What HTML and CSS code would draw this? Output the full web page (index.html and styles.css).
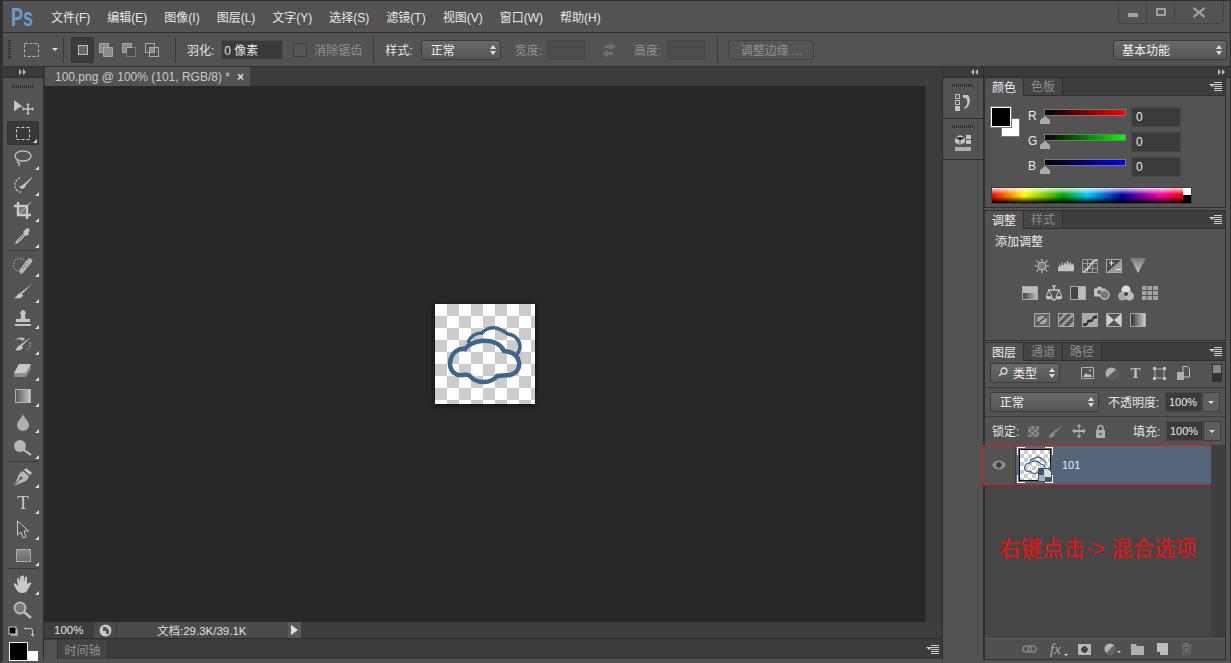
FILE: index.html
```html
<!DOCTYPE html>
<html lang="zh-CN">
<head>
  <meta charset="UTF-8" />
  <title>Photoshop - 100.png</title>
  <link rel="stylesheet" href="styles.css">
</head>
<body>

<div class="window">

  <!-- menu -->
  <header class="menubar">
    <span class="logo"><span>Ps</span></span>
    <nav class="menu">
      <span>文件(F)</span><span>编辑(E)</span><span>图像(I)</span><span>图层(L)</span><span>文字(Y)</span><span>选择(S)</span><span>滤镜(T)</span><span>视图(V)</span><span>窗口(W)</span><span>帮助(H)</span>
    </nav>
    <div class="winbtns">
      <span class="winbtn"><i class="w-min"></i></span>
      <span class="winbtn"><i class="w-max"></i></span>
      <span class="winbtn wide">
        <svg width="12" height="11" viewBox="0 0 12 11"><path d="M1 0l5 4 5-4 1 2-4 3.500 4 3.500-1 2-5-4-5 4-1-2 4-3.500-4-3.500z" fill="#a0a0a0"/></svg>
      </span>
    </div>
  </header>

  <!-- options -->
  <div class="optbar">
    <span class="grip-v"></span>
    <svg class="o-marq" width="18" height="16" viewBox="0 0 18 16"><rect x="1.500" y="1.500" width="14" height="13" fill="none" stroke="#bbb" stroke-dasharray="3 2"/></svg>
    <span class="caret o-caret"></span>
    <span class="vsep s1"></span>
    <div class="modes">
      <span class="mode active"><svg width="12" height="12" viewBox="0 0 12 12"><rect x="1.500" y="1.500" width="9" height="9" fill="#666" stroke="#c0c0c0"/></svg></span>
      <span class="mode"><svg width="16" height="16" viewBox="0 0 16 16"><rect x="1.500" y="1.500" width="9" height="9" fill="#8a8a8a" stroke="#a8a8a8"/><rect x="5.500" y="5.500" width="9" height="9" fill="#8a8a8a" stroke="#a8a8a8"/></svg></span>
      <span class="mode"><svg width="16" height="16" viewBox="0 0 16 16"><rect x="5.500" y="5.500" width="9" height="9" fill="#4c4c4c" stroke="#7a7a7a"/><path d="M1.500 1.500h9v4h-5v5h-4z" fill="#8a8a8a" stroke="#a8a8a8"/></svg></span>
      <span class="mode"><svg width="16" height="16" viewBox="0 0 16 16"><rect x="1.500" y="1.500" width="9" height="9" fill="none" stroke="#a8a8a8"/><rect x="5.500" y="5.500" width="9" height="9" fill="none" stroke="#a8a8a8"/><rect x="6" y="6" width="4" height="4" fill="#8a8a8a"/></svg></span>
    </div>
    <span class="vsep s2"></span>
    <span class="olabel feather">羽化:</span>
    <span class="ofield feather-in">0 像素</span>
    <span class="check"></span>
    <span class="olabel dim anti">消除锯齿</span>
    <span class="vsep s3"></span>
    <span class="olabel style-l">样式:</span>
    <span class="select style-s">正常<b class="updown"></b></span>
    <span class="olabel dim w-l">宽度:</span>
    <span class="ofield off w-in"></span>
    <svg class="swap" width="16" height="14" viewBox="0 0 16 14"><path d="M9 0l6 3.500-6 3.500V5H4V2h5zM7 7v2h5v3H7v2L1 10.500z" fill="#6f6f6f"/></svg>
    <span class="olabel dim h-l">高度:</span>
    <span class="ofield off h-in"></span>
    <span class="vsep s4"></span>
    <span class="refine">调整边缘 ...</span>
    <span class="select workspace">基本功能<b class="updown"></b></span>
  </div>

  <div class="main">

    <!-- tools -->
    <aside class="tools">
      <div class="strip"><svg class="arrows" width="8" height="6" viewBox="0 0 8 6"><path d="M0 0l3 3-3 3zM4 0l3 3-3 3z" fill="#c0c0c0"/></svg></div>
      <div class="grip"></div>

      <div class="tool"><svg width="24" height="18" viewBox="0 0 24 18"><path d="M3 2l9 7-4 .5-5 4z" fill="#c4c4c4"/><path d="M17 7v8M13 11h8" stroke="#c4c4c4" stroke-width="1.500"/><path d="M17 5l2 2h-4zM17 17l2-2h-4zM11 11l2-2v4zM23 11l-2-2v4z" fill="#c4c4c4"/></svg></div>
      <div class="tool more active"><svg width="16" height="15" viewBox="0 0 16 15"><rect x="1.500" y="1.500" width="13" height="12" fill="none" stroke="#d0d0d0" stroke-dasharray="3 2"/></svg></div>
      <div class="tool more"><svg width="20" height="18" viewBox="0 0 20 18"><ellipse cx="10" cy="6" rx="8" ry="5" fill="none" stroke="#bdbdbd" stroke-width="1.500"/><path d="M5 10c-2 2 0 3 1 3s1 2-1 3" fill="none" stroke="#bdbdbd" stroke-width="1.300"/></svg></div>
      <div class="tool more"><svg width="20" height="18" viewBox="0 0 20 18"><path d="M7 2a6 7 0 1 0 2 14" fill="none" stroke="#bbb" stroke-dasharray="2 1.500" stroke-width="1.500"/><path d="M19 1L11 8l-5 3c3 3 6 2 7-2l6-7z" fill="#c4c4c4"/></svg></div>
      <div class="tool more"><svg width="20" height="20" viewBox="0 0 20 20"><path d="M5 1v13h13M1 5h13v13" fill="none" stroke="#c8c8c8" stroke-width="2.500"/><path d="M6 6h7v7H6z" fill="#777"/><path d="M5 14L18 1" stroke="#c8c8c8"/></svg></div>
      <div class="tool more"><svg width="18" height="20" viewBox="0 0 18 20"><path d="M12 2c2-2 5 1 3 3l-1 1 1 1-2 2-1-1-7 7-3 2-1-1 2-3 7-7-1-1 2-2z" fill="#c4c4c4"/><path d="M4 14l6-6" stroke="#666"/></svg></div>
      <div class="hsep"></div>
      <div class="tool more"><svg width="20" height="18" viewBox="0 0 20 18"><circle cx="7" cy="8" r="6.500" fill="none" stroke="#bbb" stroke-dasharray="1.500 1.500"/><path d="M7 12L15 2c2-2 5 1 4 3L10 16c-2 2-5-1-3-4z" fill="#b5b5b5"/><path d="M11 8l3 3M13 6l2 2M9 10l2 2" stroke="#777"/></svg></div>
      <div class="tool more"><svg width="20" height="18" viewBox="0 0 20 18"><path d="M19 1L9 11l-2-1z" fill="#c4c4c4"/><path d="M7 10l3 2c0 3-5 4-9 3 3-1 3-4 6-5z" fill="#c4c4c4"/></svg></div>
      <div class="tool more"><svg width="18" height="18" viewBox="0 0 18 18"><path d="M9 1a3 3 0 0 1 2 5c0 2 0 3 1 4h4v3H2v-3h4c1-1 1-2 1-4a3 3 0 0 1 2-5z" fill="#c4c4c4"/><rect x="1" y="15" width="16" height="2" fill="#c4c4c4"/></svg></div>
      <div class="tool more"><svg width="20" height="18" viewBox="0 0 20 18"><path d="M2 5c3-3 6-3 8-2L8 1l4 3-4 3 1-2C7 4 5 4 2 5z" fill="#bbb"/><path d="M18 2L9 11l-2-1zM7 10l3 2c0 3-5 4-8 3 2-1 2-4 5-5z" fill="#c4c4c4"/><path d="M17 7a5 6 0 0 1-4 8" fill="none" stroke="#bbb" stroke-dasharray="2 1"/></svg></div>
      <div class="tool more"><svg width="20" height="16" viewBox="0 0 20 16"><path d="M6 2h12l-5 9H1z" fill="#c9c9c9"/><path d="M1 11h12v4H1zM13 11l5-9v4l-5 9z" fill="#8e8e8e"/></svg></div>
      <div class="tool more"><span class="grad-ico"></span></div>
      <div class="tool more"><svg width="14" height="18" viewBox="0 0 14 18"><path d="M7 1c1 4 6 7 6 11a6 6 0 0 1-12 0C1 8 6 5 7 1z" fill="#b0b0b0"/></svg></div>
      <div class="tool more"><svg width="20" height="18" viewBox="0 0 20 18"><circle cx="7" cy="7" r="6" fill="#b5b5b5"/><path d="M11 11l7 5" stroke="#c8c8c8" stroke-width="2"/></svg></div>
      <div class="hsep"></div>
      <div class="tool more"><svg width="20" height="20" viewBox="0 0 20 20"><path d="M13 1l6 5-2 2-6-5z" fill="#c8c8c8"/><path d="M10 4l6 5c-1 4-4 6-8 7l-7 3 3-7c1-4 3-7 6-8z" fill="#b5b5b5"/><path d="M2 18l5-6" stroke="#555"/><circle cx="8" cy="11" r="1.500" fill="#555"/></svg></div>
      <div class="tool more"><span class="tool-t">T</span></div>
      <div class="tool more"><svg width="14" height="19" viewBox="0 0 14 19"><path d="M1.500 1l11 10H8l2 6-3 1-2-6-3.500 3z" fill="#4e4e4e" stroke="#c8c8c8"/></svg></div>
      <div class="tool more"><span class="rect-ico"></span></div>
      <div class="hsep"></div>
      <div class="tool more"><svg width="20" height="19" viewBox="0 0 20 19"><path d="M5 11L4 4a1 1 0 0 1 2 0l1 3V2a1 1 0 0 1 2 0v5V1.500a1 1 0 0 1 2 0V7l1-4.500a1 1 0 0 1 2 0V9l2-1c2-1 3 0 2 1l-3 5c-1 3-3 4-6 4-3 0-5-2-6-4L1 10c-1-2 1-2 2-1z" fill="#c8c8c8"/></svg></div>
      <div class="tool"><svg width="20" height="18" viewBox="0 0 20 18"><circle cx="7" cy="7" r="5.500" fill="#777" stroke="#b8b8b8" stroke-width="2"/><path d="M11 11l7 6" stroke="#c0c0c0" stroke-width="2.500"/></svg></div>

      <div class="swaprow">
        <svg width="11" height="11" viewBox="0 0 11 11"><rect x="3" y="3" width="7" height="7" fill="#9a9a9a"/><rect x="1" y="1" width="7" height="7" fill="#000" stroke="#ccc"/></svg>
        <svg width="11" height="12" viewBox="0 0 11 12"><path d="M2 1v3l-2-1.500zM2 2h4c2 0 3 1 3 3v3h1.500L8.500 11 7 8h1V5c0-1.500-1-2-2-2H2z" fill="#c4c4c4"/></svg>
      </div>
      <div class="swatches">
        <span class="sw-bg"></span>
        <span class="sw-fg"></span>
      </div>
    </aside>

    <!-- document -->
    <section class="doc">
      <div class="tabrow">
        <div class="doctab"><span>100.png @ 100% (101, RGB/8) *</span><i>×</i></div>
      </div>
      <div class="canvasrow">
        <div class="canvas">
          <div class="picture">
            <svg width="100" height="100" viewBox="0 0 100 100">
              <path d="M33 39C35 32 41 29 47 29C50 25 56 23 61 24C66 25 70 28 73 30C80 31 85 36 85 43C85 46 84 48 82 50" fill="none" stroke="#3f658c" stroke-width="3.500"/>
              <path d="M30 45C24 44 16 48 15 59C15 68 21 72 28 71C31 71 32 70 35 72C41 80 56 80 62 72C66 71 70 72 75 71C82 69 85 64 84 58C83 52 78 48 69 47C65 39 56 36 46 37C38 38 33 41 30 45Z" fill="none" stroke="#3f658c" stroke-width="4.500"/>
            </svg>
          </div>
        </div>
        <div class="vscroll"></div>
      </div>
      <div class="statusbar">
        <span class="zoomval">100%</span>
        <span class="st-icon"><svg width="13" height="13" viewBox="0 0 13 13"><circle cx="6.500" cy="6.500" r="6" fill="#c9c9c9"/><path d="M4 3h3l3 3v4H7V7H4z" fill="#555"/></svg></span>
        <span class="st-doc">文档:29.3K/39.1K</span>
        <span class="st-next"></span>
        <span class="st-rest"></span>
      </div>
      <div class="timeline">
        <span class="tl-knob"></span>
        <span class="tl-tab">时间轴</span>
        <span class="menu-ico tl-menu"></span>
      </div>
    </section>

    <!-- collapsed dock -->
    <aside class="dock">
      <div class="strip end"><svg class="arrows" width="8" height="6" viewBox="0 0 8 6"><path d="M3 0L0 3l3 3zM7 0L4 3l3 3z" fill="#c0c0c0"/></svg></div>
      <div class="dockitem">
        <div class="grip"></div>
        <svg width="18" height="18" viewBox="0 0 18 18"><path d="M1.500 1.500h4v4h-4zM1.500 7.500h4v4h-4z" fill="none" stroke="#c4c4c4"/><path d="M1 13h5v5H1z" fill="#c4c4c4"/><path d="M9 2h5c3 4 3 10-3 14l-1-1c4-3 4-7 2-10H9z" fill="#c4c4c4"/></svg>
      </div>
      <div class="dockitem">
        <div class="grip"></div>
        <svg width="18" height="18" viewBox="0 0 18 18"><path d="M6 1l5 2.500v5L6 11 1 8.500v-5z" fill="#c4c4c4"/><path d="M1 3.500L6 6l5-2.500M6 6v5" stroke="#555"/><path d="M12 1h5v4h-5zM12 6h5v4h-5z" fill="#c4c4c4"/><path d="M1 13h16v4H1z" fill="#b0b0b0"/></svg>
      </div>
    </aside>

    <!-- panels -->
    <aside class="panels">
      <div class="strip end"><svg class="arrows" width="8" height="6" viewBox="0 0 8 6"><path d="M0 0l3 3-3 3zM4 0l3 3-3 3z" fill="#c0c0c0"/></svg></div>

      <section class="panel color">
        <div class="tabs">
          <span class="tab on">颜色</span><span class="tab">色板</span>
          <span class="menu-ico"></span>
        </div>
        <div class="color-body">
          <div class="cswatch"><span class="c-bg"></span><span class="c-fg"></span></div>
          <div class="sliders">
            <div class="srow"><label>R</label><div class="sbar"><span class="ramp r"></span><i class="thumb"></i></div><span class="val">0</span></div>
            <div class="srow"><label>G</label><div class="sbar"><span class="ramp g"></span><i class="thumb"></i></div><span class="val">0</span></div>
            <div class="srow"><label>B</label><div class="sbar"><span class="ramp b"></span><i class="thumb"></i></div><span class="val">0</span></div>
          </div>
        </div>
        <div class="spectrum"><span class="hues"></span><span class="ends"></span></div>
      </section>

      <section class="panel adjust">
        <div class="tabs">
          <span class="tab on">调整</span><span class="tab">样式</span>
          <span class="menu-ico"></span>
        </div>
        <p class="adj-title">添加调整</p>
        <div class="adj-grid">
          <div class="adj-row">
            <svg width="18" height="18" viewBox="0 0 18 18"><circle cx="9" cy="9" r="4.500" fill="#777" stroke="#ccc"/><path d="M9 1v3M9 14v3M1 9h3M14 9h3M3 3l2 2M13 13l2 2M3 15l2-2M13 5l2-2" stroke="#ccc" stroke-width="1.300"/></svg>
            <svg width="18" height="14" viewBox="0 0 18 14"><path d="M0 13V7l1 2 1-5 1 4 2-6 1 5 2-5 1 4 2-6 1 6 2-4 1 4 2-2 1 3v6z" fill="#c4c4c4"/></svg>
            <svg width="16" height="14" viewBox="0 0 16 14"><path d="M.5.500h15v13H.5zM5.500 0v14M10.500 0v14M0 4.500h16M0 9.500h16" fill="none" stroke="#9a9a9a"/><path d="M1 13c6-1 7-11 14-12" fill="none" stroke="#ddd" stroke-width="1.500"/></svg>
            <span class="adj-exp"><svg width="16" height="14" viewBox="0 0 16 14"><path d="M0 14L16 0v14z" fill="#9a9a9a"/><path d="M0 14L16 0H0z" fill="#4b4b4b"/><path d="M3 4h5M5.500 1.500v5M10 10.500h5" stroke="#e8e8e8"/></svg></span>
            <svg width="16" height="15" viewBox="0 0 16 15"><defs><linearGradient id="vib" x1="0" y1="0" x2="0" y2="1"><stop offset="0" stop-color="#777"/><stop offset="1" stop-color="#c8c8c8"/></linearGradient></defs><path d="M0 0h16L8 15z" fill="url(#vib)"/></svg>
          </div>
          <div class="adj-row">
            <span class="ai ai-hue"></span>
            <svg width="16" height="16" viewBox="0 0 16 16"><path d="M8 1v3M2 5h12" stroke="#c8c8c8" stroke-width="1.500"/><path d="M6 0h4l-2 3zM3 5L0 12h6zM13 5l-3 7h6zM0 12a3 2 0 0 0 6 0zM10 12a3 2 0 0 0 6 0zM6 14h4v1H6z" fill="none" stroke="#c8c8c8"/><path d="M0 12h6l-1 2H1zM10 12h6l-1 2h-4z" fill="#c8c8c8"/></svg>
            <span class="ai ai-bw"></span>
            <svg width="18" height="16" viewBox="0 0 18 16"><path d="M0 3h3l1-2h4l1 2h4v9H0z" fill="#c4c4c4"/><circle cx="12" cy="10" r="5" fill="#777" stroke="#bbb" stroke-width="1.500"/><circle cx="6" cy="7" r="2.500" fill="#666"/></svg>
            <svg width="16" height="16" viewBox="0 0 16 16"><circle cx="8" cy="5" r="4.500" fill="#ddd"/><circle cx="4.500" cy="11" r="4.500" fill="#aaa"/><circle cx="11.500" cy="11" r="4.500" fill="#bbb"/><circle cx="8" cy="9" r="2" fill="#444"/></svg>
            <svg width="16" height="14" viewBox="0 0 16 14"><path d="M0 0h16v14H0z" fill="#a4a4a4"/><path d="M5 0v14M10.500 0v14M0 4.500h16M0 9.500h16" stroke="#555"/></svg>
          </div>
          <div class="adj-row">
            <span class="ai ai-inv"><svg width="12" height="10" viewBox="0 0 12 10"><ellipse cx="6" cy="5" rx="5" ry="4" fill="#aaa"/><path d="M1 9L11 1" stroke="#444" stroke-width="1.500"/></svg></span>
            <span class="ai ai-post"></span>
            <span class="ai ai-thr"><svg width="16" height="14" viewBox="0 0 16 14"><path d="M0 11l4-1 1-3 5-1 1-3 5-2v4l-4 1-1 3-5 1-1 3-5 2z" fill="#333"/></svg></span>
            <span class="ai ai-map"><svg width="16" height="14" viewBox="0 0 16 14"><path d="M0 0l8 7-8 7zM16 0L8 7l8 7z" fill="#d0d0d0"/></svg></span>
            <span class="ai ai-grad"></span>
          </div>
        </div>
      </section>

      <section class="panel layers">
        <div class="tabs">
          <span class="tab on">图层</span><span class="tab">通道</span><span class="tab">路径</span>
          <span class="menu-ico"></span>
        </div>
        <div class="l-row filter">
          <span class="select kind">
            <svg width="10" height="10" viewBox="0 0 10 10"><circle cx="6" cy="4" r="3" fill="none" stroke="#ddd" stroke-width="1.300"/><path d="M4 6L1 9" stroke="#ddd" stroke-width="1.500"/></svg>
            类型<b class="updown"></b>
          </span>
          <div class="f-icons">
            <svg width="13" height="12" viewBox="0 0 13 12"><path d="M.5.500h12v11H.5z" fill="none" stroke="#b0b0b0"/><path d="M2 10l3-4 2 2 2-1 2 3z" fill="#c4c4c4"/><circle cx="9" cy="3.500" r="1" fill="#c4c4c4"/></svg>
            <svg width="13" height="13" viewBox="0 0 13 13"><circle cx="6.500" cy="6.500" r="6" fill="#b0b0b0"/><path d="M11 2.500L2 10.500a6 6 0 0 0 9-8z" fill="#5a5a5a"/></svg>
            <span class="f-t">T</span>
            <svg width="13" height="13" viewBox="0 0 13 13"><path d="M2 2h9v9H2z" fill="none" stroke="#b0b0b0"/><path d="M0 0h3v3H0zM10 0h3v3h-3zM0 10h3v3H0zM10 10h3v3h-3z" fill="#c4c4c4"/></svg>
            <svg width="13" height="14" viewBox="0 0 13 14"><path d="M6 .5h4l2.500 2.500v8H6z" fill="none" stroke="#c4c4c4"/><path d="M0 6h7v8H0z" fill="#b0b0b0"/></svg>
          </div>
          <span class="f-toggle"></span>
        </div>
        <div class="l-row mode-row">
          <span class="select blend">正常<b class="updown"></b></span>
          <span class="l-label opac">不透明度:</span>
          <span class="combo"><span class="c-val">100%</span><span class="c-btn"><i class="caret"></i></span></span>
        </div>
        <div class="l-row lock-row">
          <span class="l-label">锁定:</span>
          <div class="locks">
            <span class="lk-check"></span>
            <svg width="15" height="13" viewBox="0 0 15 13"><path d="M15 0L7 8 5 7zM5 7l2 2c0 3-4 4-7 3 2-1 2-4 5-5z" fill="#8c8c8c"/></svg>
            <svg width="14" height="14" viewBox="0 0 14 14"><path d="M7 0l2.500 2.500h-2v3.500H11V4.500L14 7l-3 2.500V8H7.500v3.500h2L7 14l-2.500-2.500h2V8H3v1.500L0 7l3-2.500V6h3.500V2.500h-2z" fill="#b0b0b0"/></svg>
            <svg width="11" height="14" viewBox="0 0 11 14"><path d="M3 6V4a2.500 2.500 0 0 1 5 0v2" fill="none" stroke="#b0b0b0" stroke-width="1.500"/><path d="M1 6h9v8H1z" fill="#b0b0b0"/><circle cx="5.500" cy="10" r="1.200" fill="#555"/></svg>
          </div>
          <span class="l-label fill">填充:</span>
          <span class="combo"><span class="c-val">100%</span><span class="c-btn"><i class="caret"></i></span></span>
        </div>

        <div class="l-list">
          <div class="l-items">
            <div class="layer">
              <span class="eye"><svg width="14" height="10" viewBox="0 0 14 10"><path d="M0 5c3-6 11-6 14 0-3 6-11 6-14 0z" fill="#8c8c8c"/><circle cx="7" cy="5" r="2.700" fill="#3d3d3d"/></svg></span>
              <span class="thumb-box">
                <span class="thumb-img">
                  <svg width="30" height="30" viewBox="0 0 100 100"><path d="M33 39C35 32 41 29 47 29C50 25 56 23 61 24C66 25 70 28 73 30C80 31 85 36 85 43" fill="none" stroke="#3f658c" stroke-width="4"/><path d="M30 45C24 44 16 48 15 59C15 68 21 72 28 71C31 71 32 70 35 72C41 80 56 80 62 72C66 71 70 72 75 71C82 69 85 64 84 58C83 52 78 48 69 47C65 39 56 36 46 37C38 38 33 41 30 45Z" fill="none" stroke="#3f658c" stroke-width="4"/></svg>
                </span>
                <span class="smart"><svg width="12" height="12" viewBox="0 0 12 12"><path d="M5 0h4l3 3v5H5z" fill="#dcdcdc"/><path d="M0 6h6v6H0z" fill="#a8b2bf"/></svg></span>
              </span>
              <span class="l-name">101</span>
            </div>
            <p class="note">右键点击-&gt; 混合选项</p>
          </div>
          <div class="l-scroll"></div>
        </div>

        <div class="l-foot">
          <svg width="15" height="8" viewBox="0 0 15 8"><rect x="1" y="1" width="8" height="6" rx="3" fill="none" stroke="#858585" stroke-width="1.500"/><rect x="6" y="1" width="8" height="6" rx="3" fill="none" stroke="#858585" stroke-width="1.500"/></svg>
          <span class="fx">fx<i class="mini"></i></span>
          <span class="f-mask"></span>
          <span class="f-adj"><svg width="12" height="12" viewBox="0 0 12 12"><circle cx="6" cy="6" r="5.500" fill="#b4b4b4"/><path d="M10 2L2 10a5.500 5.500 0 0 0 8-8z" fill="#666"/></svg><i class="mini"></i></span>
          <svg width="13" height="11" viewBox="0 0 13 11"><path d="M0 0h5l1 2h7v9H0z" fill="#b0b0b0"/></svg>
          <svg width="11" height="12" viewBox="0 0 11 12"><path d="M0 0h11v12H3V9H0z" fill="#bdbdbd"/><path d="M0 9h3v3z" fill="#444"/></svg>
          <svg width="11" height="12" viewBox="0 0 11 12"><path d="M0 2h11M4 1.500V.5h3v1M2 3.500h7V12H2zM4 5v5M5.500 5v5M7 5v5" fill="none" stroke="#777"/></svg>
        </div>
      </section>
    </aside>
  </div>
</div>

</body>
</html>
```

FILE: styles.css
```css
* {
  box-sizing: border-box;
}

html, body {
  margin: 0;
  height: 663px;
  overflow: hidden;
}

body {
  background-color: #2e2e2e;
  color: #e4e4e4;
  font-family: "Liberation Sans", "Noto Sans CJK SC", sans-serif;
  font-size: 12px;
}

.window {
  width: 1231px;
  height: 663px;
  display: flex;
  flex-direction: column;
  background-color: #535353;
  border-top: 1px solid #2f2f2f;
  border-bottom: 3px solid #535353;
  border-right: 1px solid #2f2f2f;
  border-left: 3px solid #2f2f2f;
}

/* menu */
.menubar {
  height: 31px;
  display: flex;
  align-items: center;
  padding-left: 8px;
  position: relative;
}

.logo {
  width: 40px;
  font-family: "Liberation Sans", sans-serif;
  font-weight: 700;
  font-size: 25px;
  line-height: 28px;
  color: #6b9ac9;
}

.logo span {
  display: inline-block;
  transform: scaleX(0.72);
  transform-origin: left center;
}

.menu {
  display: flex;
  gap: 17px;
  font-size: 12px;
  color: #e8e8e8;
}

.winbtns {
  position: absolute;
  top: 0;
  right: 6px;
  height: 23px;
  display: flex;
  border: 1px solid #444;
  border-top: none;
  border-radius: 0 0 4px 4px;
}

.winbtn {
  width: 28px;
  display: flex;
  align-items: center;
  justify-content: center;
  border-right: 1px solid #444;
}

.winbtn.wide {
  width: 48px;
  border-right: none;
}

.w-min {
  width: 10px;
  height: 4px;
  margin-top: 6px;
  background-color: #a0a0a0;
}

.w-max {
  width: 10px;
  height: 8px;
  border: 2px solid #a0a0a0;
}

/* options bar */
.optbar {
  height: 35px;
  display: flex;
  align-items: center;
  border-top: 1px solid #2f2f2f;
  border-bottom: 1px solid #2f2f2f;
}

.grip-v {
  width: 3px;
  height: 20px;
  margin-left: 5px;
  background: repeating-linear-gradient(#2c2c2c 0 1px, transparent 1px 2px);
}

.o-marq { margin-left: 12px; }

.caret {
  display: inline-block;
  width: 0;
  height: 0;
  border-left: 3px solid transparent;
  border-right: 3px solid transparent;
  border-top: 3px solid #ddd;
}
.o-caret { margin-left: 11px; }

.vsep {
  width: 1px;
  height: 26px;
  background-color: #3b3b3b;
}
.s1 { margin-left: 5px; }
.s2 { margin-left: 12px; }
.s3 { margin-left: 11px; }
.s4 { margin-left: 11px; }

.modes {
  display: flex;
  margin-left: 7px;
}

.mode {
  width: 23px;
  height: 26px;
  display: flex;
  align-items: center;
  justify-content: center;
}

.mode.active {
  background-color: #3c3c3c;
  border: 1px solid #333;
  border-radius: 2px;
}

.olabel {
  font-size: 12px;
  color: #e4e4e4;
  white-space: nowrap;
}
.olabel.dim { color: #909090; }
.feather { margin-left: 11px; }
.anti { margin-left: 7px; }
.style-l { margin-left: 11px; }
.w-l { margin-left: 14px; }
.h-l { margin-left: 17px; }

.ofield {
  height: 20px;
  display: flex;
  align-items: center;
  background-color: #3a3a3a;
  border: 1px solid #4a4a4a;
  padding-left: 2px;
}
.feather-in { width: 62px; margin-left: 7px; }
.ofield.off {
  width: 39px;
  background-color: #4c4c4c;
  border-color: #484848;
}
.w-in { margin-left: 5px; }
.h-in { margin-left: 6px; }
.swap { margin-left: 15px; }

.check {
  width: 14px;
  height: 14px;
  margin-left: 10px;
  background-color: #555;
  border: 1px solid #3f3f3f;
  border-radius: 2px;
}

.select {
  height: 20px;
  display: flex;
  align-items: center;
  position: relative;
  padding-left: 8px;
  background: linear-gradient(#686868, #565656);
  border: 1px solid #3a3a3a;
  border-radius: 3px;
  color: #f0f0f0;
}

.updown {
  position: absolute;
  right: 4px;
  top: 4px;
  width: 6px;
  height: 10px;
}

.updown::before,
.updown::after {
  content: "";
  display: block;
  width: 0;
  height: 0;
  border-left: 3px solid transparent;
  border-right: 3px solid transparent;
}

.updown::before { border-bottom: 4px solid #ddd; }
.updown::after { border-top: 4px solid #ddd; margin-top: 2px; }

.style-s { width: 80px; margin-left: 8px; padding-left: 9px; }

.refine {
  width: 86px;
  height: 20px;
  margin-left: 10px;
  display: flex;
  align-items: center;
  justify-content: center;
  color: #919191;
  background-color: #555;
  border: 1px solid #444;
  border-radius: 3px;
}

.workspace {
  width: 114px;
  margin-left: auto;
  margin-right: 3px;
}

/* main area */
.main {
  flex: 1;
  display: flex;
  min-height: 0;
}

.strip {
  height: 11px;
  flex: none;
  display: flex;
  align-items: center;
  justify-content: center;
  background-color: #3a3a3a;
  border-bottom: 1px solid #2d2d2d;
}

.strip.end {
  justify-content: flex-end;
  padding-right: 4px;
}

.grip {
  height: 16px;
  flex: none;
  margin: 0 auto;
  width: 22px;
  background: repeating-linear-gradient(90deg, #2c2c2c 0 1px, transparent 1px 2px) center / 22px 3px no-repeat;
}

/* tools */
.tools {
  width: 41px;
  display: flex;
  flex-direction: column;
  border-right: 1px solid #2d2d2d;
}

.tool {
  height: 26px;
  display: flex;
  align-items: center;
  justify-content: center;
  position: relative;
  flex: none;
}

.tool.more::after {
  content: "";
  position: absolute;
  right: 4px;
  bottom: 2px;
  border-left: 4px solid transparent;
  border-bottom: 4px solid #ddd;
}

.tool.active {
  background-color: #383838;
  border: 1px solid #333;
  border-radius: 2px;
  height: 24px;
  margin: 1px 4px;
}
.tool.active::after { right: 1px; bottom: 1px; }

.hsep {
  height: 3px;
  flex: none;
  margin: 0 5px;
  border-top: 1px solid #3a3a3a;
}

.grad-ico {
  width: 16px;
  height: 14px;
  background: linear-gradient(90deg, #5a5a5a, #c4c4c4);
  border: 1px solid #b0b0b0;
}

.rect-ico {
  width: 15px;
  height: 13px;
  background: linear-gradient(#888, #6c6c6c);
  border: 1px solid #aaa;
}

.tool-t {
  font-family: "Liberation Serif", serif;
  font-size: 19px;
  color: #c8c8c8;
}

.swaprow {
  height: 17px;
  flex: none;
  display: flex;
  align-items: center;
  justify-content: space-between;
  padding: 0 8px 0 5px;
}

.swatches {
  position: relative;
  flex: 1;
}

.sw-fg {
  position: absolute;
  left: 6px;
  top: 2px;
  width: 19px;
  height: 19px;
  background-color: #000;
  border: 1px solid #eee;
}

.sw-bg {
  position: absolute;
  left: 25px;
  top: 11px;
  width: 10px;
  height: 10px;
  background-color: #fff;
}

/* document */
.doc {
  width: 899px;
  display: flex;
  flex-direction: column;
  border-right: 1px solid #2d2d2d;
}

.tabrow {
  height: 19px;
  display: flex;
  padding-left: 1px;
  background-color: #3c3c3c;
}

.doctab {
  width: 205px;
  display: flex;
  align-items: center;
  justify-content: space-between;
  padding: 0 6px 0 10px;
  background-color: #535353;
  color: #c9c9c9;
  font-size: 12px;
}

.doctab i {
  font-style: normal;
  font-weight: 700;
  color: #ddd;
}

.canvasrow {
  height: 536px;
  display: flex;
}

.canvas {
  flex: 1;
  display: flex;
  align-items: center;
  justify-content: center;
  background-color: #282828;
}

.vscroll {
  width: 17px;
  background-color: #3c3c3c;
  border-left: 1px solid #343434;
}

.picture {
  width: 100px;
  height: 100px;
  background-color: #fff;
  background-image: conic-gradient(#ccc 25%, #fff 0 50%, #ccc 0 75%, #fff 0);
  background-size: 24px 24px;
  box-shadow: 0 1px 6px rgba(0, 0, 0, 0.7);
}

.statusbar {
  height: 17px;
  display: flex;
  align-items: center;
  background-color: #3e3e3e;
  border-bottom: 1px solid #2d2d2d;
  font-size: 11.500px;
}

.zoomval {
  width: 50px;
  padding-left: 10px;
  color: #e4e4e4;
}

.st-icon {
  width: 23px;
  height: 16px;
  display: flex;
  align-items: center;
  justify-content: center;
  background-color: #4b4b4b;
  border-right: 1px solid #3a3a3a;
}

.st-doc {
  width: 171px;
  height: 16px;
  display: flex;
  align-items: center;
  padding-left: 40px;
  background-color: #4b4b4b;
  color: #e0e0e0;
}

.st-next {
  width: 13px;
  height: 16px;
  background-color: #5a5a5a;
  position: relative;
}

.st-next::after {
  content: "";
  position: absolute;
  left: 3px;
  top: 3px;
  border-top: 5px solid transparent;
  border-bottom: 5px solid transparent;
  border-left: 7px solid #e0e0e0;
}

.st-rest {
  flex: 1;
  height: 16px;
}

.timeline {
  height: 20px;
  display: flex;
  align-items: center;
  background-color: #3c3c3c;
  position: relative;
}

.tl-knob {
  width: 14px;
  height: 19px;
  background-color: #535353;
  border-right: 1px solid #2d2d2d;
}

.tl-tab {
  width: 50px;
  height: 19px;
  display: flex;
  align-items: center;
  justify-content: center;
  color: #8f8f8f;
  background-color: #444;
  border-right: 1px solid #333;
}

.tl-menu { margin-left: auto; }

/* dock */
.dock {
  width: 41px;
  display: flex;
  flex-direction: column;
  border-right: 1px solid #2d2d2d;
}

.dockitem {
  height: 41px;
  display: flex;
  flex-direction: column;
  align-items: center;
  border-bottom: 1px solid #2d2d2d;
}

.dockitem .grip { height: 15px; }

.menu-ico {
  width: 13px;
  height: 9px;
  margin-left: auto;
  margin-right: 3px;
  background: repeating-linear-gradient(#ccc 0 1px, transparent 1px 2px) right / 8px 9px no-repeat;
  position: relative;
}

.menu-ico::before {
  content: "";
  position: absolute;
  left: 0;
  top: 2px;
  border-left: 3px solid transparent;
  border-right: 3px solid transparent;
  border-top: 3px solid #ccc;
}

/* panels */
.panels {
  flex: 1;
  display: flex;
  flex-direction: column;
  margin-right: 4px;
}

.panels .strip { margin-right: -4px; }

.panel {
  display: flex;
  flex-direction: column;
  border: 1px solid #2f2f2f;
  border-top: none;
}

.tabs {
  height: 18px;
  display: flex;
  align-items: stretch;
  background-color: #3e3e3e;
  border-bottom: 1px solid #2f2f2f;
  flex: none;
}

.tab {
  width: 39px;
  display: flex;
  align-items: center;
  justify-content: center;
  padding-bottom: 2px;
  color: #8c8c8c;
  background-color: #454545;
  border-right: 1px solid #2f2f2f;
}

.tab.on {
  color: #ededed;
  background-color: #535353;
  margin-bottom: -1px;
}

.tabs .menu-ico { align-self: center; }

/* color panel */
.color { height: 130px; flex: none; }

.color-body {
  display: flex;
  padding: 11px 0 0 6px;
}

.cswatch {
  width: 29px;
  height: 30px;
  position: relative;
}

.c-fg {
  position: absolute;
  left: 0;
  top: 0;
  width: 20px;
  height: 20px;
  background-color: #000;
  border: 1px solid #fff;
  outline: 1px solid #777;
}

.c-bg {
  position: absolute;
  right: 0;
  bottom: 0;
  width: 19px;
  height: 19px;
  background-color: #fff;
  border: 1px solid #777;
}

.sliders {
  margin-left: 8px;
  display: flex;
  flex-direction: column;
  gap: 5px;
}

.srow {
  height: 20px;
  display: flex;
}

.srow label {
  width: 16px;
  line-height: 18px;
  color: #ededed;
}

.sbar {
  width: 82px;
  position: relative;
}

.ramp {
  display: block;
  height: 7px;
  margin-top: 2px;
  border: 1px solid #777;
}
.ramp.r { background: linear-gradient(90deg, #000, #f00); }
.ramp.g { background: linear-gradient(90deg, #000, #0f0); }
.ramp.b { background: linear-gradient(90deg, #000, #00f); }

.thumb {
  position: absolute;
  left: -4px;
  top: 9px;
  width: 10px;
  height: 8px;
  background-color: #aaa;
  clip-path: polygon(50% 0, 100% 50%, 100% 100%, 0 100%, 0 50%);
}

.val {
  width: 50px;
  height: 20px;
  margin-left: 5px;
  display: flex;
  align-items: center;
  padding-left: 4px;
  background-color: #3b3b3b;
  border: 1px solid #474747;
  color: #ededed;
}

.spectrum {
  width: 201px;
  height: 17px;
  margin: 10px 0 0 6px;
  display: flex;
  border: 1px solid #3f3f3f;
}

.hues {
  flex: 1;
  background:
    linear-gradient(rgba(255, 255, 255, 0.85), transparent 42%, transparent 55%, #000),
    linear-gradient(90deg, #f00, #ff0 17%, #0a0 37%, #0cf 50%, #00a 68%, #f0a 88%, #f00);
}

.ends {
  width: 8px;
  background: linear-gradient(#fff 50%, #000 50%);
}

/* adjustments */
.adjust {
  height: 131px;
  flex: none;
  margin-top: 2px;
  border-top: 1px solid #2f2f2f;
}

.adj-title {
  margin: 4px 0 0 10px;
  font-size: 12px;
  line-height: 18px;
  color: #ededed;
}

.adj-grid {
  width: 200px;
  margin: 6px 0 0 5px;
  display: flex;
  flex-direction: column;
  gap: 10px;
}

.adj-row {
  height: 17px;
  display: flex;
  align-items: center;
  justify-content: center;
  gap: 8px;
}

.adj-row > * {
  width: 16px;
  flex: none;
}

.adj-exp, .ai {
  display: flex;
  height: 14px;
}

.adj-exp { outline: 1px solid #aaa; outline-offset: -1px; }

.ai { border: 1px solid #aaa; align-items: center; justify-content: center; overflow: hidden; }
.ai-hue { background: linear-gradient(#bbb 50%, transparent 50%), linear-gradient(90deg, #444, #bbb); }
.ai-bw { background: linear-gradient(90deg, #444 50%, #bbb 50%); }
.ai-inv { background-color: #666; }
.ai-post { background: repeating-linear-gradient(135deg, #555 0 3px, #999 3px 6px); }
.ai-thr { background-color: #aaa; }
.ai-map { background-color: #555; }
.ai-grad { background: linear-gradient(90deg, #333, #ccc); }

/* layers */
.layers {
  flex: 1;
  margin-top: 1px;
  border-top: 1px solid #2f2f2f;
  min-height: 0;
}

.l-row {
  display: flex;
  align-items: center;
  padding-left: 5px;
  border-bottom: 1px solid #3c3c3c;
  flex: none;
}

.l-row .select,
.l-label {
  padding-bottom: 2px;
}

.filter { height: 27px; padding-bottom: 2px; }
.mode-row { height: 29px; }
.lock-row { height: 29px; padding-left: 7px; }

.kind {
  width: 70px;
  gap: 5px;
  padding-left: 7px;
}

.f-icons {
  display: flex;
  align-items: center;
  margin-left: 21px;
  gap: 11px;
}

.f-icons > * {
  width: 13px;
  flex: none;
}

.f-t {
  font-family: "Liberation Serif", serif;
  font-size: 15px;
  font-weight: 700;
  line-height: 14px;
  color: #c0c0c0;
  text-align: center;
}

.f-toggle {
  width: 10px;
  height: 18px;
  margin-left: 22px;
  background: linear-gradient(#888 50%, #333 50%);
  border: 1px solid #333;
}

.blend { width: 109px; padding-left: 9px; }

.l-label {
  color: #e4e4e4;
  white-space: nowrap;
}

.opac { margin-left: 9px; width: 57px; }
.fill { margin-left: auto; width: 33px; }

.combo {
  display: flex;
  width: 55px;
  height: 20px;
  margin-right: 4px;
}

.c-val {
  width: 37px;
  display: flex;
  align-items: center;
  padding-left: 3px;
  background-color: #3a3a3a;
  border: 1px solid #474747;
  font-size: 11px;
  color: #ededed;
}

.c-btn {
  flex: 1;
  display: flex;
  align-items: center;
  justify-content: center;
  background-color: #5e5e5e;
  border: 1px solid #3f3f3f;
}

.locks {
  display: flex;
  align-items: center;
  margin-left: 9px;
  gap: 9px;
}

.locks > * { flex: none; }

.lk-check {
  width: 11px;
  height: 11px;
  background: conic-gradient(#8a8a8a 25%, #666 0 50%, #8a8a8a 0 75%, #666 0);
  background-size: 6px 6px;
}

.l-list {
  flex: 1;
  display: flex;
  min-height: 0;
  background-color: #464646;
}

.l-items {
  flex: 1;
  min-width: 0;
}

.l-scroll {
  width: 14px;
  background-color: #3f3f3f;
}

.layer {
  height: 38px;
  margin-left: -2px;
  display: flex;
  align-items: center;
  background-color: #56657a;
  outline: 1px solid #e01b1b;
}

.eye {
  width: 33px;
  height: 100%;
  display: flex;
  align-items: center;
  justify-content: center;
  background-color: #535353;
  border-right: 1px solid #3d3d3d;
}

.thumb-box {
  width: 36px;
  height: 36px;
  margin-left: 1px;
  position: relative;
  display: flex;
  align-items: center;
  justify-content: center;
  background:
    linear-gradient(#fff, #fff) 0 0 / 8px 1px no-repeat,
    linear-gradient(#fff, #fff) 0 0 / 1px 8px no-repeat,
    linear-gradient(#fff, #fff) 100% 0 / 8px 1px no-repeat,
    linear-gradient(#fff, #fff) 100% 0 / 1px 8px no-repeat,
    linear-gradient(#fff, #fff) 0 100% / 8px 1px no-repeat,
    linear-gradient(#fff, #fff) 0 100% / 1px 8px no-repeat,
    linear-gradient(#fff, #fff) 100% 100% / 8px 1px no-repeat,
    linear-gradient(#fff, #fff) 100% 100% / 1px 8px no-repeat;
}

.thumb-img {
  width: 32px;
  height: 32px;
  background-color: #fff;
  background-image: conic-gradient(#ccc 25%, #fff 0 50%, #ccc 0 75%, #fff 0);
  background-size: 8px 8px;
  border: 1px solid #111;
}

.smart {
  position: absolute;
  right: 1px;
  bottom: 1px;
  width: 14px;
  height: 14px;
  display: flex;
  align-items: center;
  justify-content: center;
  background-color: #44546a;
}

.l-name {
  margin-left: 9px;
  font-size: 11px;
  color: #f0f0f0;
}

.note {
  margin: 50px 0 0 14px;
  font-size: 21.500px;
  line-height: 30px;
  color: #f01010;
  white-space: nowrap;
}

.l-foot {
  height: 21px;
  flex: none;
  display: flex;
  align-items: center;
  padding-left: 37px;
  gap: 13px;
  background-color: #505050;
  border-top: 1px solid #5e5e5e;
}

.l-foot > * { flex: none; }

.fx {
  width: 15px;
  font-family: "Liberation Serif", serif;
  font-style: italic;
  font-size: 15px;
  color: #aaa;
  position: relative;
}

.mini {
  position: absolute;
  right: -3px;
  bottom: 2px;
  border-left: 2px solid transparent;
  border-right: 2px solid transparent;
  border-top: 2px solid #ddd;
}

.f-mask {
  width: 13px;
  height: 11px;
  background: radial-gradient(circle, #444 3px, #b8b8b8 3.500px);
}

.f-adj {
  width: 14px;
  display: flex;
  position: relative;
}
```
